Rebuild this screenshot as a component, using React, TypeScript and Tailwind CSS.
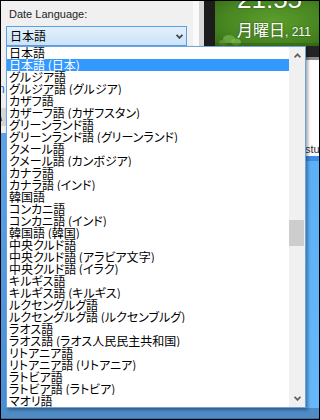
import React from 'react';

const languages = [
  '日本語',
  '日本語 (日本)',
  'グルジア語',
  'グルジア語 (グルジア)',
  'カザフ語',
  'カザーフ語 (カザフスタン)',
  'グリーンランド語',
  'グリーンランド語 (グリーンランド)',
  'クメール語',
  'クメール語 (カンボジア)',
  'カナラ語',
  'カナラ語 (インド)',
  '韓国語',
  'コンカニ語',
  'コンカニ語 (インド)',
  '韓国語 (韓国)',
  '中央クルド語',
  '中央クルド語 (アラビア文字)',
  '中央クルド語 (イラク)',
  'キルギス語',
  'キルギス語 (キルギス)',
  'ルクセングルグ語',
  'ルクセングルグ語 (ルクセンブルグ)',
  'ラオス語',
  'ラオス語 (ラオス人民民主共和国)',
  'リトアニア語',
  'リトアニア語 (リトアニア)',
  'ラトビア語',
  'ラトビア語 (ラトビア)',
  'マオリ語',
];

const Chevron = ({ up, className }: { up?: boolean; className?: string }) => (
  <svg width="7" height="5" viewBox="0 0 7 5" className={className}>
    <path
      d={up ? 'M0.6 4.4 L3.5 1.3 L6.4 4.4' : 'M0.6 0.8 L3.5 3.9 L6.4 0.8'}
      fill="none"
      stroke="currentColor"
      strokeWidth="1.7"
    />
  </svg>
);

const Desktop = () => (
  <div className="relative flex-1 overflow-hidden bg-[#4a8a22]">
    <svg className="absolute inset-0" width="104" height="45" viewBox="0 0 104 45">
      <defs>
        <radialGradient id="g1" cx="0.55" cy="0.45" r="0.8">
          <stop offset="0" stopColor="#5c9e2c" />
          <stop offset="0.6" stopColor="#478521" />
          <stop offset="1" stopColor="#356a15" />
        </radialGradient>
      </defs>
      <rect width="104" height="45" fill="url(#g1)" />
      <ellipse cx="14" cy="38" rx="6" ry="4" fill="#6fae45" opacity="0.8" />
      <ellipse cx="21" cy="41" rx="5" ry="3.5" fill="#78b84e" opacity="0.8" />
      <ellipse cx="8" cy="42" rx="4" ry="3" fill="#5f9e38" opacity="0.8" />
      <rect y="42" width="104" height="3" fill="#2f5e14" opacity="0.5" />
    </svg>
    <div className="relative flex flex-col pl-[22px] text-white [text-shadow:0_0_2px_rgba(0,0,0,0.5)]">
      <div className="-mt-[15px] text-[26px] leading-[26px] font-['Liberation_Sans',sans-serif]">21:55</div>
      <div className="mt-[9px] flex items-baseline whitespace-nowrap">
        <span className="text-[16px] leading-[16px] font-['Noto_Sans_CJK_JP',sans-serif]">月曜日</span>
        <span className="text-[12px] leading-[16px] font-['Liberation_Sans',sans-serif]">, 211</span>
      </div>
    </div>
  </div>
);

export default function App() {
  return (
    <div className="w-[320px] h-[420px] border border-black overflow-hidden flex flex-col bg-[#4c8ac6]">
      <div className="h-[45px] flex shrink-0">
        <div className="w-[192px] bg-[#f0f0f0] flex flex-col pl-[5px] pt-[7px]">
          <div className="ml-[3px] h-[13px] text-[11px] leading-[13px] text-[#1e1e1e] font-['Liberation_Sans',sans-serif]">
            Date Language:
          </div>
          <div className="mt-[5px] w-[181px] h-[20px] border border-[#5a9fe3] bg-gradient-to-b from-[#e3f0fc] to-[#cbe3f8] flex items-center pl-[3px] pr-[3px]">
            <span className="flex-1 text-[12px] leading-[14px] text-black font-['Noto_Sans_CJK_JP',sans-serif]">日本語</span>
            <Chevron className="text-[#444] mr-[0px]" />
          </div>
        </div>
        <div className="w-[6px] bg-[#fafafa]" />
        <div className="w-[5px] bg-[#d8d8d8]" />
        <div className="w-[11px] bg-[#1c1c1c]" />
        <Desktop />
      </div>

      <div className="h-[362px] flex shrink-0">
        <div className="w-[5px] flex flex-col">
          <div className="h-[87px] bg-[#f0f0f0] flex flex-col overflow-hidden">
            <div className="mt-[38px] -ml-[3px] text-[12px] leading-[10px] text-[#1a6fc6] font-['Liberation_Sans',sans-serif]">n</div>
            <div className="mt-[14px] h-[18px] bg-[#d6d6d6] text-[11px] leading-[18px] -ml-[2px] text-[#333] font-['Liberation_Sans',sans-serif]">\</div>
          </div>
          <div className="flex-1 bg-gradient-to-b from-[#5ca4ea] to-[#4a8ed6]" />
        </div>

        <div className="relative z-10 w-[300px] border border-[#6aa3e0] bg-white flex shadow-[2px_2px_3px_rgba(0,0,0,0.35)]">
          <div className="w-[282px] flex flex-col font-['Noto_Sans_CJK_JP',sans-serif] [font-feature-settings:'palt'] text-[12px] leading-[12px]">
            {languages.map((name, i) => (
              <div
                key={i}
                className={`h-[12px] pl-[2px] whitespace-nowrap overflow-hidden ${
                  i === 1 ? 'bg-[#3399ff] text-white' : 'text-black'
                }`}
              >
                {name}
              </div>
            ))}
          </div>
          <div className="w-[16px] bg-[#f0f0f0] flex flex-col">
            <div className="h-[17px] flex items-center justify-center text-[#606060]">
              <Chevron up />
            </div>
            <div className="flex-1">
              <div className="mt-[156px] w-[15px] h-[26px] bg-[#cdcdcd]" />
            </div>
            <div className="h-[17px] flex items-center justify-center text-[#606060]">
              <Chevron />
            </div>
          </div>
        </div>

        <div className="w-[13px] flex flex-col">
          <div className="h-[11px] bg-[#242424]" />
          <div className="h-[3px] bg-[#8a8a8a]" />
          <div className="h-[96px] bg-white flex flex-col justify-end overflow-hidden">
            <div className="text-[11px] leading-[12px] text-[#333] font-['Liberation_Sans',sans-serif] -ml-[1px] mb-[1px]">stu</div>
          </div>
          <div className="h-[5px] bg-[#3d8de6]" />
          <div className="flex-1 bg-gradient-to-b from-[#5cb0f6] to-[#66b8fa]" />
        </div>
      </div>

      <div className="flex-1 bg-[#4e8cc8] border-b border-[#3a6fa6]" />
    </div>
  );
}
